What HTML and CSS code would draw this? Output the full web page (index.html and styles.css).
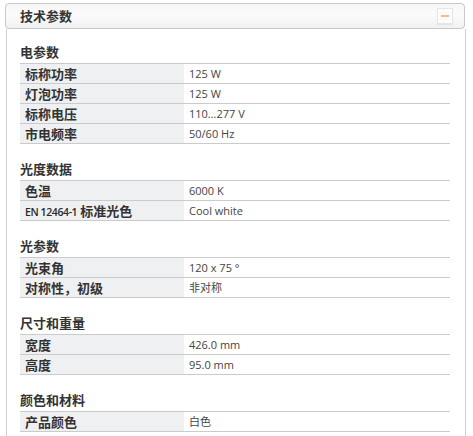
FILE: index.html
```html
<!DOCTYPE html>
<html lang="zh">
<head>
<meta charset="utf-8">
<link rel="stylesheet" href="styles.css">
</head>
<body>
<div class="panel">
  <div class="panel-head">
    <span class="panel-title">技术参数</span>
    <span class="toggle"><span class="dash"></span></span>
  </div>
  <div class="panel-body">
    <section class="group">
      <h3 class="group-title">电参数</h3>
      <div class="specs">
        <div class="row"><div class="key">标称功率</div><div class="val">125 W</div></div>
        <div class="row"><div class="key">灯泡功率</div><div class="val">125 W</div></div>
        <div class="row"><div class="key">标称电压</div><div class="val">110…277 V</div></div>
        <div class="row"><div class="key">市电频率</div><div class="val">50/60 Hz</div></div>
      </div>
    </section>
    <section class="group">
      <h3 class="group-title">光度数据</h3>
      <div class="specs">
        <div class="row"><div class="key">色温</div><div class="val">6000 K</div></div>
        <div class="row"><div class="key"><span class="latin">EN 12464-1</span> 标准光色</div><div class="val">Cool white</div></div>
      </div>
    </section>
    <section class="group">
      <h3 class="group-title">光参数</h3>
      <div class="specs">
        <div class="row"><div class="key">光束角</div><div class="val">120 x 75 °</div></div>
        <div class="row"><div class="key">对称性，初级</div><div class="val">非对称</div></div>
      </div>
    </section>
    <section class="group">
      <h3 class="group-title">尺寸和重量</h3>
      <div class="specs">
        <div class="row"><div class="key">宽度</div><div class="val">426.0 mm</div></div>
        <div class="row"><div class="key">高度</div><div class="val">95.0 mm</div></div>
      </div>
    </section>
    <section class="group">
      <h3 class="group-title">颜色和材料</h3>
      <div class="specs">
        <div class="row"><div class="key">产品颜色</div><div class="val">白色</div></div>
      </div>
    </section>
  </div>
</div>
</body>
</html>
```
FILE: styles.css
```css
html, body {
  margin: 0;
  padding: 0;
  background: #fff;
}
body {
  font-family: "Noto Sans", "Noto Sans CJK SC", sans-serif;
  color: #333;
}
.panel {
  margin: 3px 0 0 5px;
  width: 461px;
}
.panel-head {
  box-sizing: border-box;
  width: 460px;
  height: 26px;
  border: 1px solid #c9c9c9;
  border-radius: 4px;
  background: linear-gradient(#f6f6f6, #fbfbfb 45%, #f1f1f1);
  display: flex;
  align-items: center;
  justify-content: space-between;
  padding: 0 11px 0 14px;
}
.panel-title {
  font-family: "Noto Sans CJK SC", sans-serif;
  font-weight: bold;
  font-size: 13px;
  color: #333;
  line-height: 24px;
}
.toggle {
  box-sizing: border-box;
  width: 16px;
  height: 16px;
  background: #fdfdfd;
  border: 1px solid #e6e6e6;
  box-shadow: 0 1px 1px rgba(0,0,0,0.06);
  display: flex;
  align-items: center;
  justify-content: center;
}
.dash {
  width: 8px;
  height: 2px;
  background: #f5b98a;
}
.panel-body {
  box-sizing: border-box;
  margin-left: 1px;
  width: 460px;
  border-left: 1px solid #cfcfcf;
  border-right: 1px solid #cfcfcf;
  padding: 13px 15px 10px 13px;
}
.group + .group {
  margin-top: 15px;
}
.group-title {
  margin: 0 0 1px 0;
  font-family: "Noto Sans CJK SC", sans-serif;
  font-size: 13px;
  font-weight: bold;
  line-height: 20px;
  height: 20px;
  color: #333;
}
.specs {
  width: 430px;
  border-top: 1px solid #cbcbcb;
}
.row {
  display: grid;
  grid-template-columns: 164px 1fr;
  height: 19px;
  border-bottom: 1px solid #cbcbcb;
}
.key {
  background: #eff0f1;
  padding: 0 5px;
  font-family: "Noto Sans CJK SC", sans-serif;
  font-weight: bold;
  font-size: 13px;
  line-height: 19px;
  color: #333;
  white-space: nowrap;
  overflow: hidden;
}
.key .latin {
  font-family: "Open Sans", sans-serif;
  font-size: 10.5px;
  font-weight: 600;
  letter-spacing: -0.4px;
  color: #2a2a2a;
}
.val {
  padding: 0 5px;
  font-family: "Open Sans", "Noto Sans CJK SC", sans-serif;
  font-size: 11px;
  line-height: 19px;
  color: #444;
  white-space: nowrap;
  overflow: hidden;
}
```
